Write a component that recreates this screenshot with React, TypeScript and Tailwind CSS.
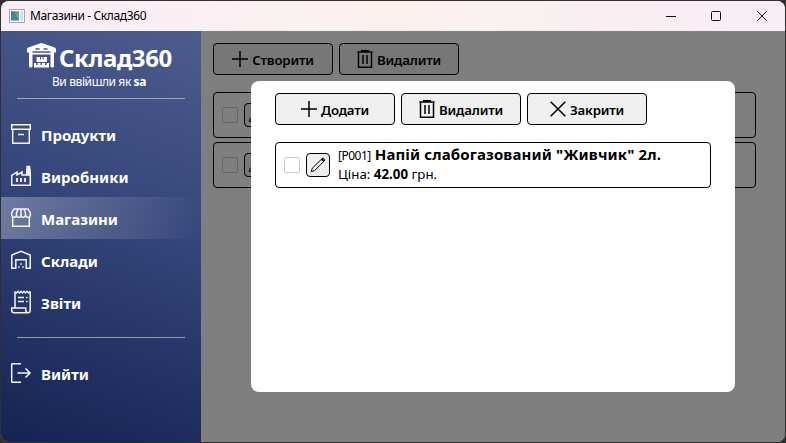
import type { ReactNode } from 'react';

function Icon({ children, className, box = 24, stroke = 1.5 }: { children: ReactNode; className: string; box?: number; stroke?: number }) {
  return (
    <svg viewBox={`0 0 ${box} ${box}`} className={`shrink-0 ${className}`} fill="none" stroke="currentColor" strokeWidth={stroke}>
      {children}
    </svg>
  );
}

const plus = <path d="M8 0V16M0 8H16" />;
const cross = <path d="M.7.7 15.3 15.3M15.3.7.7 15.3" />;
const trash = <path d="M.3 2H15.7M4.7 1.5V.7H11.3V1.5M1.5 2V17.3H14.5V2M6 5V14M10 5V14" />;

function ToolButton({ icon, label }: { icon: 'plus' | 'cross' | 'trash'; label: string }) {
  return (
    <button className="flex h-8 w-[120px] items-center justify-center gap-1 rounded border border-black bg-[#efefef] text-black">
      <svg viewBox={icon === 'trash' ? '0 0 16 18' : '0 0 16 16'} className={icon === 'trash' ? 'h-[18px] w-4 shrink-0' : 'h-4 w-4 shrink-0'} fill="none" stroke="currentColor" strokeWidth="1.5">
        {icon === 'plus' ? plus : icon === 'cross' ? cross : trash}
      </svg>
      <span className="pt-0.5 text-[13.3px] leading-5 font-semibold tracking-[-0.2px]">{label}</span>
    </button>
  );
}

function Row({ children }: { children?: ReactNode }) {
  return (
    <div className="flex h-[46px] items-center rounded border border-black pl-2">
      <span className="h-4 w-4 shrink-0 rounded-[2px] border border-[#ccc] bg-white" />
      <span className="ml-[6px] flex h-6 w-6 shrink-0 items-center justify-center rounded border border-black bg-[#efefef]">
        <svg viewBox="0 0 16 16" className="h-4 w-4" fill="none" stroke="black" strokeWidth="1">
          <path d="M1.3 14.7 2.3 11.2 12.2 1.5Q13.2.8 14.2 1.8T14.5 3.8L4.6 13.6Z" />
          <path d="m11.8 2 2.3 2.3" strokeWidth="1.8" />
        </svg>
      </span>
      {children}
    </div>
  );
}

const menu = [
  {
    label: 'Продукти',
    icon: <path d="M.7.7H19.3V5.3H.7ZM1.7 5.3V19.3H18.3V5.3M7 10.5H13" />,
  },
  {
    label: 'Виробники',
    icon: (
      <>
        <path d="M.7 19.3V9.3L6 6V9L11 6V9H15.5L16.3.6H18.5L19.3 9V19.3Z" />
        <path d="M16.5 1H18.3L19 9H15.8Z" fill="currentColor" />
        <path d="M6 12V16M10 12V16M14 12V16" strokeWidth="1.8" />
      </>
    ),
  },
  {
    label: 'Магазини',
    icon: (
      <>
        <path d="M3 1H17L19.3 5V7Q19.3 9.3 17 9.3T14.5 7Q14.5 9.3 12.2 9.3T10 7Q10 9.3 7.7 9.3T5.5 7Q5.5 9.3 3.2 9.3T.7 7V5ZM7 1 5.5 5V7M10 1V7M13 1 14.5 5V7" />
        <path d="M1.7 9V18.3H18.3V9" />
      </>
    ),
  },
  {
    label: 'Склади',
    icon: (
      <>
        <path d="M.8 18.2V5L10 1.2 19.2 5V18.2H15.2V9.8H4.8V18.2Z" />
        <path d="M7.2 17H8.7M11.3 17H12.8M9.2 14H10.8" strokeWidth="1.5" />
      </>
    ),
  },
  {
    label: 'Звіти',
    icon: (
      <>
        <path d="M4 16V-.5M19.2-.5V18.5Q19.2 20.8 17 20.8H3Q.7 20.8.7 18V16H14.8V18Q14.8 20.8 17 20.8" />
        <path d="M4-.3 5.5 1 7-.7 8.5 1 10-.7 11.5 1 13-.7 14.5 1 16-.7 17.5 1 19.2-.7M7 5.5H13M7 9.5H13M15 5.5H16.5M15 9.5H16.5" strokeWidth="1.4" />
      </>
    ),
  },
];

function MenuItem({ label, active, children }: { label: string; active?: boolean; children: ReactNode }) {
  return (
    <a className={`flex h-[42px] items-center gap-[10px] pl-[10px] text-white ${active ? 'bg-linear-to-r from-white/30 to-transparent' : ''}`}>
      <Icon box={20} className="h-5 w-5 overflow-visible text-[#f4f5fa]" stroke={1.5}>
        {children}
      </Icon>
      <span className="pt-px text-[15px] leading-5 font-bold">{label}</span>
    </a>
  );
}

export default function App() {
  return (
    <div className="h-[443px] w-[786px] bg-[#303030] p-px font-['Noto_Sans','Open_Sans',sans-serif]">
      <div className="flex h-[441px] w-[784px] flex-col overflow-hidden rounded-lg bg-white">
        <header className="flex h-[30px] shrink-0 items-center bg-linear-to-r from-[#f9edf7] via-[#faf1ee] to-[#f8edf6] pl-2 text-black">
          <svg viewBox="0 0 16 14" className="h-[14px] w-4">
            <path d="M.5.5H15.5V13.5H.5Z" fill="#f4f4f4" stroke="#a0a8b0" />
            <path d="M2 2.5H10V11.5H2Z" fill="#46898c" />
            <path d="M2 2.5H6L2 9Z" fill="#4c739d" />
            <path d="M6 3.5H10V11.5Z" fill="#65a788" />
            <path d="M11.5 2.5H14V11.5H11.5Z" fill="#d5dde2" />
          </svg>
          <span className="ml-[5px] text-xs tracking-[-0.38px]">Магазини - Склад360</span>
          <div className="ml-auto flex items-center">
            <svg viewBox="0 0 10 10" className="mr-[35px] h-[10px] w-[10px]" stroke="#111"><path d="M0 5.5H10" /></svg>
            <svg viewBox="0 0 10 10" className="mr-[36px] h-[10px] w-[10px]" fill="none" stroke="#111"><rect x=".5" y=".5" width="9" height="9" rx="1" /></svg>
            <svg viewBox="0 0 10 10" className="mr-[18px] h-[10px] w-[10px]" stroke="#111"><path d="m.3.3 9.4 9.4M9.7.3.3 9.7" /></svg>
          </div>
        </header>
        <div className="relative flex min-h-0 flex-1">
          <aside className="relative z-10 flex w-[200px] shrink-0 flex-col bg-linear-[200deg,#4d5c8e_0%,#34457b_45%,#152353_100%] text-white">
            <div className="flex h-[42px] items-end gap-[3px] pt-2 pl-[26px]">
              <svg viewBox="0 0 29 25" className="mb-[5px] h-[25px] w-[29px] shrink-0" fill="currentColor">
                <path d="M0 6.2Q0 5 1.2 4.5L13.5.2Q14.5-.1 15.5.2L27.8 4.5Q29 5 29 6.2V9.5H27V23Q27 24.5 25.3 24.5T23.5 23V11.5H5.5V23Q5.5 24.5 3.8 24.5T2 23V9.5H0Z" />
                <path d="M5.5 9H23.5M8.5 6H12.5M16.5 6H20.5" stroke="#495889" strokeWidth="1.4" />
                <path d="M9.5 14H13V16.5H14V14H15.5V16.5H16.5V14H20V19H9.5ZM7 20H9V22H10.5V20H13.5V22H15V20H18V22H19.5V20H22V24.5H7Z" />
              </svg>
              <h1 className="text-2xl leading-[30px] font-bold tracking-[-0.4px]">Склад360</h1>
            </div>
            <p className="pr-1 text-center text-xs leading-[18px] tracking-[-0.4px]">Ви ввійшли як <b>sa</b></p>
            <div className="mx-4 mt-[7px] h-px shrink-0 bg-[#a2a5aa]" />
            <nav className="mt-[14px]">
              {menu.map(({ label, icon }, i) => (
                <MenuItem key={label} label={label} active={i === 2}>{icon}</MenuItem>
              ))}
            </nav>
            <div className="mx-4 mt-[14px] h-px shrink-0 bg-[#969ba9]" />
            <div className="mt-[14px]">
              <MenuItem label="Вийти">
                <path d="M10 .7H1.5Q.7.7.7 1.5V18.5Q.7 19.3 1.5 19.3H10M6.5 10H19M14.5 5.5 19 10l-4.5 4.5" />
              </MenuItem>
            </div>
          </aside>
          <main className="flex-1 pt-3 pr-[29px] pl-3">
            <div className="flex gap-[6px]">
              <ToolButton icon="plus" label="Створити" />
              <ToolButton icon="trash" label="Видалити" />
            </div>
            <div className="mt-[17px] flex flex-col gap-1">
              <Row />
              <Row />
            </div>
          </main>
          <div className="absolute inset-0 bg-black/50">
            <section className="absolute top-[50px] left-[250px] h-[311px] w-[484px] rounded-lg bg-white px-6 pt-3">
              <div className="flex gap-[6px]">
                <ToolButton icon="plus" label="Додати" />
                <ToolButton icon="trash" label="Видалити" />
                <ToolButton icon="cross" label="Закрити" />
              </div>
              <div className="mt-[17px]">
                <Row>
                  <div className="ml-2 pb-0.5 whitespace-nowrap text-black">
                    <div className="flex h-5 items-baseline gap-1 leading-5">
                      <span className="text-xs tracking-[-0.5px]">[P001]</span>
                      <b className="text-[15px] tracking-[0.12px]">Напій слабогазований "Живчик" 2л.</b>
                    </div>
                    <div className="h-5 text-[13.3px] leading-5">Ціна: <b>42.00</b> грн.</div>
                  </div>
                </Row>
              </div>
            </section>
          </div>
        </div>
      </div>
    </div>
  );
}
